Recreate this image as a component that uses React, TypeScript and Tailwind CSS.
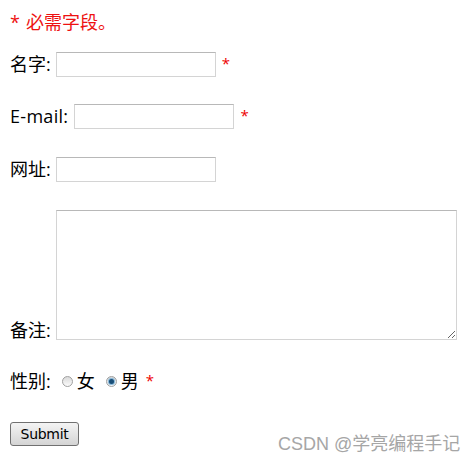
import React from "react";

const font = { fontFamily: '"Open Sans", "Noto Sans CJK SC", sans-serif' };

function Star() {
  return <span className="ml-[6px] self-start pt-[1px] text-[15px] leading-[20px] text-[#ee0000]">*</span>;
}

function TextInput() {
  return (
    <input
      type="text"
      className="h-[25px] w-[160px] border border-[#d4d4d4] border-t-[#b8b8b8] bg-white px-1 text-[14px] outline-none"
    />
  );
}

function Radio({ checked }: { checked?: boolean }) {
  return (
    <span className="flex h-[11px] w-[11px] items-center justify-center rounded-full border border-[#a0a0a0] bg-gradient-to-b from-[#dadada] to-[#fbfbfb]">
      {checked && <span className="h-[5px] w-[5px] rounded-full bg-[#1a4f78] shadow-[0_0_1px_1px_#79b0d6]" />}
    </span>
  );
}

export default function App() {
  return (
    <main className="relative h-[456px] w-[474px] bg-white pl-[10px] text-[18px] text-black" style={font}>
      {/* Required note */}
      <div className="mt-[9px] flex h-[26px] items-center text-[#ee1111]">
        <span className="mr-[6px]">*</span>
        <span>必需字段。</span>
      </div>

      <form className="flex flex-col">
        <div className="mt-[17px] flex h-[25px] items-center">
          <label className="mr-[5px]">名字:</label>
          <TextInput />
          <Star />
        </div>

        <div className="mt-[27px] flex h-[25px] items-center">
          <label className="mr-[6px] tracking-[0.3px]">E-mail:</label>
          <TextInput />
          <Star />
        </div>

        <div className="mt-[28px] flex h-[25px] items-center">
          <label className="mr-[5px]">网址:</label>
          <TextInput />
        </div>

        <div className="mt-[28px] flex items-end">
          <label className="mb-[-2px] mr-[5px] leading-[24px]">备注:</label>
          <textarea className="h-[130px] w-[401px] border border-[#d4d4d4] border-t-[#b8b8b8] bg-white outline-none" />
        </div>

        <div className="mt-[31px] flex h-[20px] items-center">
          <label className="mr-[11px]">性别:</label>
          <Radio />
          <span className="ml-[4px] mr-[11px]">女</span>
          <Radio checked />
          <span className="ml-[4px]">男</span>
          <span className="ml-[7px] self-start text-[15px] leading-[18px] text-[#ee0000]">*</span>
        </div>

        <div className="mt-[28px]">
          <button
            type="button"
            className="h-[24px] w-[69px] rounded-[3px] border border-[#707070] bg-gradient-to-b from-[#f4f4f4] to-[#d4d4d4] text-[14px] leading-none text-black"
            style={{ fontFamily: '"DejaVu Sans", sans-serif', letterSpacing: "-0.3px" }}
          >
            Submit
          </button>
        </div>
      </form>

      {/* Watermark */}
      <div
        className="absolute left-[278px] top-[424px] text-[18px] leading-[22px] text-[#a6a6a6]"
        style={{ fontFamily: '"Liberation Sans", "Noto Sans CJK SC", sans-serif' }}
      >
        CSDN @学亮编程手记
      </div>
    </main>
  );
}
